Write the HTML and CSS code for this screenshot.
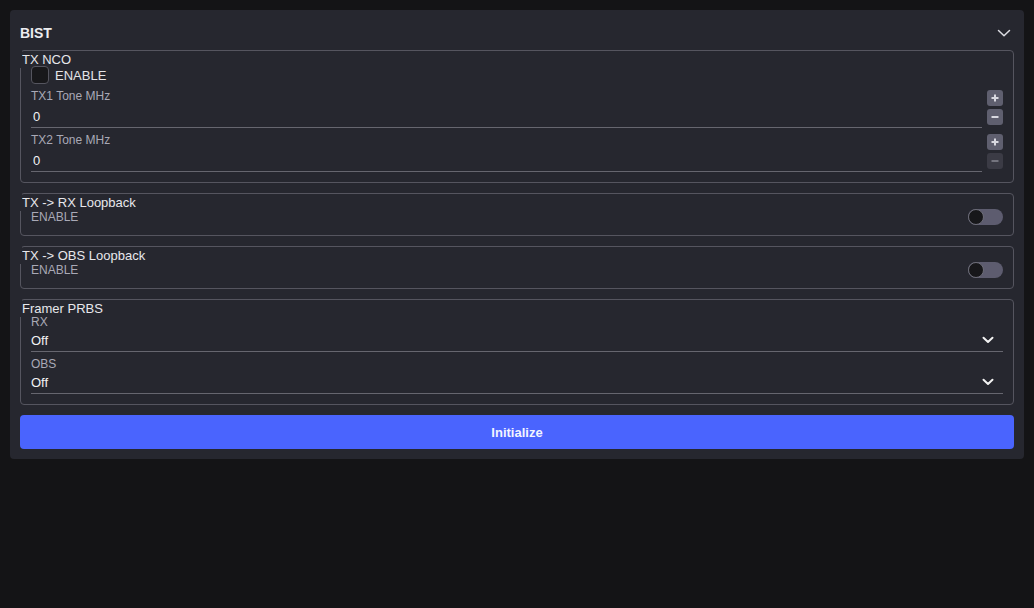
FILE: index.html
```html
<!DOCTYPE html>
<html lang="en">

<head>
    <meta charset="UTF-8">
    <title>BIST</title>
    <link rel="stylesheet" href="styles.css">
</head>

<body>
    <section class="card">
        <div class="card-head">
            <h2>BIST</h2>
            <svg class="chevron" width="16" height="16" viewBox="0 0 16 16">
                <path d="M2.5 5.5 L8 10.8 L13.5 5.5" fill="none" stroke="#dcdce2" stroke-width="1.5" stroke-linecap="round" stroke-linejoin="round" />
            </svg>
        </div>

        <div class="group">
            <div class="group-title">TX NCO</div>
            <div class="check-row">
                <span class="checkbox"></span>
                <span>ENABLE</span>
            </div>
            <div class="num-field">
                <div class="field-main">
                    <label class="field-label">TX1 Tone MHz</label>
                    <input class="text-input" type="text" value="0">
                </div>
                <div class="stepper">
                    <button class="step">
                        <svg width="10" height="10" viewBox="0 0 10 10"><path d="M5 1.5 V8.5 M1.5 5 H8.5" stroke="currentColor" stroke-width="2" /></svg>
                    </button>
                    <button class="step">
                        <svg width="10" height="10" viewBox="0 0 10 10"><path d="M1.5 5 H8.5" stroke="currentColor" stroke-width="2" /></svg>
                    </button>
                </div>
            </div>
            <div class="num-field">
                <div class="field-main">
                    <label class="field-label">TX2 Tone MHz</label>
                    <input class="text-input" type="text" value="0">
                </div>
                <div class="stepper">
                    <button class="step">
                        <svg width="10" height="10" viewBox="0 0 10 10"><path d="M5 1.5 V8.5 M1.5 5 H8.5" stroke="currentColor" stroke-width="2" /></svg>
                    </button>
                    <button class="step disabled">
                        <svg width="10" height="10" viewBox="0 0 10 10"><path d="M1.5 5 H8.5" stroke="currentColor" stroke-width="2" /></svg>
                    </button>
                </div>
            </div>
        </div>

        <div class="group">
            <div class="group-title">TX -&gt; RX Loopback</div>
            <div class="switch-row">
                <span class="field-label">ENABLE</span>
                <span class="switch"><span class="knob"></span></span>
            </div>
        </div>

        <div class="group">
            <div class="group-title">TX -&gt; OBS Loopback</div>
            <div class="switch-row">
                <span class="field-label">ENABLE</span>
                <span class="switch"><span class="knob"></span></span>
            </div>
        </div>

        <div class="group">
            <div class="group-title">Framer PRBS</div>
            <div class="select-field first">
                <label class="field-label">RX</label>
                <div class="select-wrap">
                    <select class="select">
                        <option>Off</option>
                    </select>
                    <svg class="select-arrow" width="12" height="8" viewBox="0 0 12 8">
                        <path d="M1.5 1.8 L6 6 L10.5 1.8" fill="none" stroke="#f2f2f2" stroke-width="2" stroke-linecap="round" stroke-linejoin="round" />
                    </svg>
                </div>
            </div>
            <div class="select-field">
                <label class="field-label">OBS</label>
                <div class="select-wrap">
                    <select class="select">
                        <option>Off</option>
                    </select>
                    <svg class="select-arrow" width="12" height="8" viewBox="0 0 12 8">
                        <path d="M1.5 1.8 L6 6 L10.5 1.8" fill="none" stroke="#f2f2f2" stroke-width="2" stroke-linecap="round" stroke-linejoin="round" />
                    </svg>
                </div>
            </div>
        </div>

        <button class="primary">Initialize</button>
    </section>
</body>

</html>
```

FILE: styles.css
```css
* {
    margin: 0;
    padding: 0;
    box-sizing: border-box;
}

body {
    background-color: #141416;
    font-family: "Liberation Sans", Arial, sans-serif;
    color: #e4e4e8;
    padding: 10px;
}

.card {
    background-color: #26272f;
    border-radius: 4px;
    padding: 10px;
}

.card-head {
    display: flex;
    justify-content: space-between;
    align-items: center;
    height: 26px;
    margin-bottom: 4px;
}

.card-head h2 {
    font-size: 14px;
    font-weight: bold;
    color: #ececf0;
}

.chevron {
    margin-right: 2px;
}

.group {
    position: relative;
    border: 1px solid #55555f;
    border-radius: 4px;
    padding: 0 10px 10px 10px;
    margin-bottom: 10px;
}

/* the title sits on the top-left corner */
.group::before {
    content: "";
    position: absolute;
    left: -1px;
    top: -1px;
    width: 2px;
    height: 18px;
    background-color: #26272f;
}

.group-title {
    font-size: 13px;
    line-height: 17px;
    margin-left: -9px;
    margin-bottom: -2px;
    color: #e8e8ec;
}

.check-row {
    display: flex;
    align-items: center;
    gap: 6px;
    height: 18px;
    font-size: 13px;
}

.checkbox {
    width: 18px;
    height: 18px;
    border: 1px solid #55555f;
    border-radius: 4px;
    background-color: #18181b;
}

.field-label {
    display: block;
    font-size: 12px;
    line-height: 14px;
    color: #a9a9b6;
}

.num-field {
    display: flex;
    gap: 5px;
    margin-top: 5px;
}

.field-main {
    flex: 1;
}

.text-input {
    display: block;
    width: 100%;
    height: 23px;
    margin-top: 2px;
    padding: 0 2px;
    border: none;
    border-bottom: 1px solid #66666f;
    background: transparent;
    color: #f2f2f4;
    font-family: inherit;
    font-size: 13px;
    outline: none;
}

.stepper {
    display: flex;
    flex-direction: column;
    gap: 3px;
    align-self: flex-end;
    margin-bottom: 3px;
}

.step {
    display: flex;
    align-items: center;
    justify-content: center;
    width: 16px;
    height: 16px;
    border: none;
    border-radius: 3px;
    background-color: #5f5f6f;
    color: #d8d8e0;
}

.step.disabled {
    background-color: #3b3b45;
    color: #74747e;
}

.switch-row {
    display: flex;
    justify-content: space-between;
    align-items: center;
    height: 16px;
}

.switch {
    display: flex;
    width: 35px;
    height: 16px;
    border-radius: 8px;
    background-color: #5d5c6f;
}

.knob {
    width: 16px;
    height: 16px;
    border-radius: 50%;
    border: 1px solid #6d6d78;
    background-color: #17171a;
}

.select-field {
    margin-top: 5px;
}

.select-field.first {
    margin-top: 0;
}

.select-wrap {
    display: grid;
    align-items: center;
    border-bottom: 1px solid #66666f;
}

.select {
    grid-area: 1 / 1;
    appearance: none;
    -webkit-appearance: none;
    height: 22px;
    border: none;
    background: transparent;
    color: #f2f2f4;
    font-family: inherit;
    font-size: 13px;
    outline: none;
}

.select-arrow {
    grid-area: 1 / 1;
    justify-self: end;
    margin-right: 9px;
}

.primary {
    display: block;
    width: 100%;
    height: 34px;
    border: none;
    border-radius: 4px;
    background-color: #4a64fe;
    color: #f2f4ff;
    font-family: inherit;
    font-size: 13px;
    font-weight: bold;
}
```
